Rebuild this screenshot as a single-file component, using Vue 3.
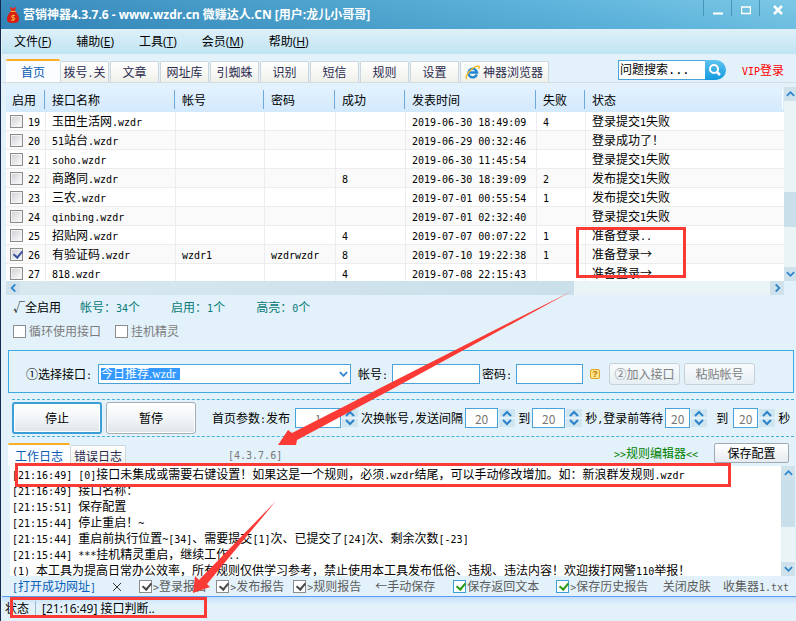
<script setup>
import { ref, h } from 'vue'

// Splits a string so that Latin runs sit on a half-width grid beside full-width glyphs
const T = (props) =>
  h('span', { class: 'mix' },
    props.s.split(/([\x20-\x7e]+)/).filter(Boolean).map((p) =>
      /^[\x20-\x7e]/.test(p) ? h('span', { class: 'half' }, p) : p))
T.props = ['s']

const menus = [['文件', 'F'], ['辅助', 'E'], ['工具', 'T'], ['会员', 'M'], ['帮助', 'H']]
const tabs = ['首页', '拨号.关', '文章', '网址库', '引蜘蛛', '识别', '短信', '规则', '设置']
const heads = ['启用', '接口名称', '帐号', '密码', '成功', '发表时间', '失败', '状态']
const rows = ref([
  { id: 19, on: false, cells: ['玉田生活网.wzdr', '', '', '', '2019-06-30 18:49:09', '4', '登录提交1失败'] },
  { id: 20, on: false, cells: ['51站台.wzdr', '', '', '', '2019-06-29 00:32:46', '', '登录成功了！'] },
  { id: 21, on: false, cells: ['soho.wzdr', '', '', '', '2019-06-30 11:45:54', '', '登录提交1失败'] },
  { id: 22, on: false, cells: ['商路同.wzdr', '', '', '8', '2019-06-30 18:39:09', '2', '发布提交1失败'] },
  { id: 23, on: false, cells: ['三农.wzdr', '', '', '', '2019-07-01 00:55:54', '1', '发布提交1失败'] },
  { id: 24, on: false, cells: ['qinbing.wzdr', '', '', '', '2019-07-01 02:32:40', '', '登录提交1失败'] },
  { id: 25, on: false, cells: ['招贴网.wzdr', '', '', '4', '2019-07-07 00:07:22', '1', '准备登录..'] },
  { id: 26, on: true, cells: ['有验证码.wzdr', 'wzdr1', 'wzdrwzdr', '8', '2019-07-10 19:22:38', '1', '准备登录→'] },
  { id: 27, on: false, cells: ['818.wzdr', '', '', '4', '2019-07-08 22:15:43', '', '准备登录→'] },
])
const logs = [
  '[21:16:49] [0]接口未集成或需要右键设置！如果这是一个规则，必须.wzdr结尾，可以手动修改增加。如：新浪群发规则.wzdr',
  '[21:16:49] 接口名称：',
  '[21:15:51] 保存配置',
  '[21:15:44] 停止重启！~',
  '[21:15:44] 重启前执行位置~[34]、需要提交[1]次、已提交了[24]次、剩余次数[-23]',
  '[21:15:44] ***挂机精灵重启，继续工作..',
  '(1) 本工具为提高日常办公效率，所有规则仅供学习参考，禁止使用本工具发布低俗、违规、违法内容！欢迎拨打网警110举报！',
]
const reports = ['>登录报告', '>发布报告', '>规则报告']
</script>

<template>
  <div class="window" lang="zh-CN">
    <header class="title">
      <svg class="bag" viewBox="0 0 12 16" aria-hidden="true">
        <path d="M3 0 6 1 9 0 8 4H4Z" fill="#e32a1c" />
        <path d="M4 4h4c2 2 4 5 4 8 0 3-2 4-6 4s-6-1-6-4c0-3 2-6 4-8Z" fill="#d81d14" />
        <path d="M3.500 4.500h5" stroke="#f2b632" />
        <path d="M8 8.500H5.500a1 1 0 0 0 0 2h1a1 1 0 0 1 0 2.500H4M6 7.500v6.500" fill="none" stroke="#f4b83c" />
      </svg>
      <h1>营销神器4.3.7.6 - www.wzdr.cn 微赚达人.CN [用户:龙儿小哥哥]</h1>
      <div class="winbtns">
        <button type="button" aria-label="最小化"><svg viewBox="0 0 10 10"><path d="M0 8.500h10" stroke="#fff" stroke-width="2" /></svg></button>
        <button type="button" aria-label="最大化"><svg viewBox="0 0 10 10"><path d="M0 2h10M.5 2v6.500h9V2" fill="none" stroke="#fff" stroke-width="1.500" /></svg></button>
        <button type="button" class="close" aria-label="关闭"><svg viewBox="0 0 10 10"><path d="M1 1l8 8M9 1 1 9" stroke="#fff" stroke-width="2.500" /></svg></button>
      </div>
    </header>

    <nav class="menu">
      <button v-for="m in menus" :key="m[1]" type="button">{{ m[0] }}(<u>{{ m[1] }}</u>)</button>
    </nav>

    <div class="tabbar">
      <div class="tabs">
        <button v-for="(t, i) in tabs" :key="t" type="button" class="tab" :class="{ active: i === 0 }"><T :s="t" /></button>
        <button type="button" class="tab wide">
          <svg class="ie" viewBox="0 0 15 15" aria-hidden="true">
            <path d="M11.800 9.500A4.300 4.300 0 1 1 12 7.500H4" fill="none" stroke="#1f86d2" stroke-width="2.400" />
            <path d="M2 14C-1 11 7 2 13 1c2 0 1 2 .5 3" fill="none" stroke="#f0bd2c" stroke-width="1.500" />
          </svg>
          <T s="神器浏览器" />
        </button>
      </div>
      <form class="search" @submit.prevent>
        <input type="text" value="问题搜索..." aria-label="问题搜索" />
        <button type="submit" aria-label="搜索">
          <svg viewBox="0 0 14 14"><circle cx="6" cy="6" r="4" fill="none" stroke="#fff" stroke-width="2" /><path d="m9 9 3 3" stroke="#fff" stroke-width="2.500" /></svg>
        </button>
      </form>
      <a class="vip" href="#"><T s="VIP登录" /></a>
    </div>

    <div class="grid">
      <div class="gridview">
        <table>
          <colgroup><col class="c40" /><col class="c130" /><col class="c89" /><col class="c71" /><col class="c70" /><col class="c131" /><col class="c49" /><col /></colgroup>
          <thead>
            <tr><th v-for="x in heads" :key="x" scope="col"><div>{{ x }}</div></th></tr>
          </thead>
          <tbody>
            <tr v-for="r in rows" :key="r.id">
              <td class="pick"><label><input v-model="r.on" type="checkbox" class="box soft" /><T :s="String(r.id)" /></label></td>
              <td v-for="(c, i) in r.cells" :key="i"><T :s="c" /></td>
            </tr>
          </tbody>
        </table>
      </div>
      <div class="vbar">
        <button type="button" aria-label="向上"><svg viewBox="0 0 10 10"><path d="m1 7 4-4 4 4" /></svg></button>
        <i class="space"></i><i class="thumb"></i><i class="space small"></i>
        <button type="button" aria-label="向下"><svg viewBox="0 0 10 10"><path d="m1 3 4 4 4-4" /></svg></button>
      </div>
    </div>
    <div class="hbar">
      <button type="button" aria-label="向左"><svg viewBox="0 0 10 10"><path d="M7 1 3 5l4 4" /></svg></button>
      <i class="thumb"></i><i class="space"></i>
      <button type="button" aria-label="向右"><svg viewBox="0 0 10 10"><path d="m3 1 4 4-4 4" /></svg></button>
    </div>

    <div class="counts">
      <button type="button">√全启用</button>
      <T s="帐号：34个" /><T s="启用：1个" /><T s="高亮：0个" />
    </div>
    <div class="opts">
      <label><input type="checkbox" class="box" />循环使用接口</label>
      <label><input type="checkbox" class="box" />挂机精灵</label>
    </div>

    <section class="account">
      <label for="iface"><T s="①选择接口:" /></label>
      <div class="combo">
        <select id="iface"><option>今日推荐.wzdr</option></select>
        <svg viewBox="0 0 10 10" aria-hidden="true"><path d="m1 3 4 4 4-4" /></svg>
      </div>
      <label for="acc"><T s="帐号:" /></label>
      <input id="acc" type="text" class="field long" />
      <label for="pwd"><T s="密码:" /></label>
      <input id="pwd" type="text" class="field" />
      <button type="button" class="help" aria-label="帮助">?</button>
      <button type="button" class="flat">②加入接口</button>
      <button type="button" class="flat">粘贴帐号</button>
    </section>

    <section class="run">
      <button type="button" class="big primary">停止</button>
      <button type="button" class="big">暂停</button>
      <label for="n1" class="first"><T s="首页参数:发布" /></label>
      <div class="spin w46"><input id="n1" type="text" value="1" /><svg viewBox="0 0 16 18"><path d="M0 0h16v8H0zM0 10h16v8H0z" class="bg" /><path d="m4 7 4-4 4 4M4 11l4 4 4-4" /></svg></div>
      <label for="n2"><T s="次换帐号,发送间隔" /></label>
      <div class="spin w33"><input id="n2" type="text" value="20" /><svg viewBox="0 0 16 18"><path d="M0 0h16v8H0zM0 10h16v8H0z" class="bg" /><path d="m4 7 4-4 4 4M4 11l4 4 4-4" /></svg></div>
      <label for="n3">到</label>
      <div class="spin w33"><input id="n3" type="text" value="20" /><svg viewBox="0 0 16 18"><path d="M0 0h16v8H0zM0 10h16v8H0z" class="bg" /><path d="m4 7 4-4 4 4M4 11l4 4 4-4" /></svg></div>
      <label for="n4"><T s="秒,登录前等待" /></label>
      <div class="spin w25"><input id="n4" type="text" value="20" /><svg viewBox="0 0 16 18"><path d="M0 0h16v8H0zM0 10h16v8H0z" class="bg" /><path d="m4 7 4-4 4 4M4 11l4 4 4-4" /></svg></div>
      <label for="n5" class="apart">到</label>
      <div class="spin w25"><input id="n5" type="text" value="20" /><svg viewBox="0 0 16 18"><path d="M0 0h16v8H0zM0 10h16v8H0z" class="bg" /><path d="m4 7 4-4 4 4M4 11l4 4 4-4" /></svg></div>
      <span>秒</span>
    </section>

    <div class="logbar">
      <button type="button" class="tab active">工作日志</button>
      <button type="button" class="tab">错误日志</button>
      <span class="ver">[4.3.7.6]</span>
      <a class="editor" href="#"><T s=">>规则编辑器<<" /></a>
      <button type="button" class="save">保存配置</button>
    </div>
    <div class="log">
      <div class="lines"><p v-for="(l, i) in logs" :key="i"><T :s="l" /></p></div>
      <div class="vbar">
        <button type="button" aria-label="向上"><svg viewBox="0 0 10 10"><path d="m1 7 4-4 4 4" /></svg></button>
        <i class="thumb"></i><i class="space"></i>
        <button type="button" aria-label="向下"><svg viewBox="0 0 10 10"><path d="m1 3 4 4 4-4" /></svg></button>
      </div>
    </div>

    <div class="tools">
      <a class="open" href="#"><T s="[打开成功网址]" /></a>
      <button type="button" class="x" aria-label="清除"><svg viewBox="0 0 10 10"><path d="m1 1 8 8M9 1 1 9" /></svg></button>
      <div class="reports">
        <label v-for="r in reports" :key="r"><input type="checkbox" class="box" checked /><T :s="r" /></label>
      </div>
      <button type="button" class="manual">←手动保存</button>
      <label class="ret"><input type="checkbox" class="box green" checked />保存返回文本</label>
      <label class="hist"><input type="checkbox" class="box green" checked /><T s=">保存历史报告" /></label>
      <button type="button" class="skin">关闭皮肤</button>
      <a class="txt" href="#"><T s="收集器1.txt" /></a>
    </div>

    <footer class="status"><span>状态</span><span class="msg">[21:16:49] 接口判断..</span></footer>

    <svg class="marks" width="796" height="621" viewBox="0 0 796 621" aria-hidden="true">
      <g fill="none" stroke="#fb3a35" stroke-width="3">
        <rect x="577.500" y="228.500" width="107" height="48" />
        <rect x="16.500" y="464.500" width="713" height="21" />
        <rect x="11.500" y="598.500" width="194" height="18" />
      </g>
      <path d="M572 291 396 380 292 433 288 430 278 445H296L297 440 396 387Z" fill="#fb3a35" />
      <path d="M276 501 199 580 195 576 193 593 210 587 207 584Z" fill="#fb3a35" />
    </svg>
  </div>
</template>

<style>
body { margin: 0; overflow: hidden; }
.mix { white-space: pre; }
.mix .half { font-family: "DejaVu Sans Mono", monospace; font-size: 10px; line-height: 10px; }
</style>

<style scoped>
.window {
  position: relative;
  display: flex;
  flex-direction: column;
  height: 100vh;
  box-sizing: border-box;
  border-left: 1px solid #14294f;
  padding-left: 1px;
  overflow: hidden;
  background: #e3f2fa;
  color: #000;
  font: 12px/16px "Noto Sans CJK SC", sans-serif;
}
.window * { box-sizing: border-box; }
button, input, select { font: inherit; color: inherit; margin: 0; padding: 0; border: 0; background: none; border-radius: 0; }
button, label, a, span { white-space: nowrap; }
a { color: inherit; text-decoration: none; }
i { display: block; }

.title {
  display: flex;
  align-items: center;
  flex: none;
  height: 29px;
  margin-left: -1px;
  padding-left: 6px;
  background: linear-gradient(12deg, #3182b6 0%, #4a9fca 40%, #5cb2da 70%, #7cc8e6 100%);
  color: #fff;
}
.bag { width: 12px; height: 16px; }
h1 { flex: 1; margin: 0 0 0 4px; font: bold 12px/18px "Open Sans", "Noto Sans CJK SC", sans-serif; white-space: nowrap; }
.winbtns { display: flex; align-self: flex-start; }
.winbtns button { width: 28px; height: 16px; border-left: 1px solid #4597bd; }
.winbtns .close { width: 37px; }
.winbtns svg { display: block; width: 10px; height: 10px; margin: 3px auto 0; }

.menu { display: flex; gap: 25px; flex: none; height: 25px; padding-left: 12px; background: linear-gradient(#dff0f8, #bfe4f4); font-family: "Open Sans", "Noto Sans CJK SC", sans-serif; }

.tabbar { display: flex; flex: none; align-items: flex-end; height: 29px; border-bottom: 1px solid #d4dde2; padding-left: 4px; }
.tabs { display: flex; }
.tab { align-self: flex-end; width: 49px; height: 21px; margin-right: 1px; border: 1px solid #ccd6dc; border-bottom: 0; border-radius: 2px 2px 0 0; background: linear-gradient(#fff, #f0f0ea); color: #2c2c50; line-height: 18px; }
.tab.active { width: 54px; height: 23px; margin-right: 0; border: 0; border-top: 2px solid #f8ac28; background: #fcfdff; color: #0a5bb5; }
.tab.wide { display: flex; align-items: center; gap: 3px; width: 89px; padding-left: 4px; }
.ie { width: 15px; height: 15px; flex: none; }
.search { display: flex; align-self: center; margin-left: auto; height: 20px; margin-top: 4px; }
.search input { width: 87px; padding-left: 1px; border: 1px solid #4aa3d8; border-right: 0; background: #fff; font-family: "DejaVu Sans Mono", "Noto Sans CJK SC", sans-serif; }
.search button { width: 21px; border-radius: 0 10px 10px 0; background: linear-gradient(#5fc4f0, #129ade); }
.search svg { display: block; width: 14px; height: 14px; margin-left: 3px; }
.vip { align-self: center; margin: 4px 12px 0 16px; color: #f00; }

.grid { display: flex; flex: none; height: 194px; margin: 4px 0 0 4px; }
.gridview { flex: 1; min-width: 0; overflow: hidden; }
table { width: 100%; table-layout: fixed; border-collapse: separate; border-spacing: 0; background: #fff; }
.c40 { width: 40px; } .c130 { width: 130px; } .c89 { width: 89px; } .c71 { width: 71px; }
.c70 { width: 70px; } .c131 { width: 131px; } .c49 { width: 49px; }
th { height: 25px; padding: 0; background: linear-gradient(#e3f2ff, #d3e9fc); font-weight: normal; text-align: left; }
th div { height: 19px; margin-right: 1px; padding-left: 6px; border-right: 1px solid #6da9dd; line-height: 19px; }
th:last-child div { border-color: #fff; }
td { height: 19px; padding: 0 0 0 6px; border-right: 1px solid #ececec; border-bottom: 1px solid #ececec; line-height: 18px; overflow: hidden; white-space: nowrap; }
td:last-child { border-right: 0; }
tbody tr:nth-child(even) { background: #fafafa; }
td.pick { padding-left: 4px; }
td label, .opts label, .tools label { display: flex; align-items: center; }
td label { gap: 5px; }

.box { appearance: none; flex: none; width: 13px; height: 13px; border: 1px solid #8c8c8c; background: #fff; }
.box.soft { background: linear-gradient(135deg, #ccced4, #fff); box-shadow: inset 0 0 0 1px #f2f2f2; }
.box:checked::after { content: ""; display: block; width: 4px; height: 7px; margin: 0 0 0 4px; border: solid #484848; border-width: 0 2px 2px 0; transform: rotate(40deg); }
.box.soft:checked::after { border-color: #3a52a0; }
.box.green { border-color: #3b9fd8; }
.box.green:checked::after { border-color: #2c9a14; }

.vbar { display: flex; flex-direction: column; flex: none; width: 12px; background: #eaf3f6; }
.vbar button, .hbar button { display: flex; align-items: center; justify-content: center; flex: none; width: 100%; height: 14px; background: #cfe2ec; }
.vbar svg, .hbar svg, .combo svg { width: 9px; height: 10px; flex: none; }
.vbar path, .hbar path, .combo path, .spin path { fill: none; stroke: #2c83cc; stroke-width: 2; }
.space { flex: 92; }
.space.small { flex: 40; }
.grid .thumb { flex: 35; background: #c9dfea; }
.hbar { display: flex; flex: none; height: 14px; margin: 0 12px 0 4px; background: #eaf3f6; }
.hbar button { width: 14px; }
.hbar .thumb { flex: 553; background: linear-gradient(90deg, #d8e8ef, #c9dfea); }
.hbar .space { flex: 196; }

.counts { display: flex; gap: 31px; flex: none; height: 24px; padding-left: 11px; line-height: 24px; color: #087a78; }
.counts button { color: #000; margin-right: -12px; }
.opts { display: flex; gap: 14px; flex: none; height: 24px; padding-left: 11px; color: #7c7c7c; }
.opts label { gap: 3px; }

.account { display: flex; align-items: center; flex: none; height: 43px; margin: 7px 2px 6px 6px; padding: 4px 0 0 17px; border: 1px solid #3cabe0; }
.combo { position: relative; flex: 1 1 253px; max-width: 480px; margin: 0 7px 0 6px; }
.combo select { display: block; appearance: none; width: 100%; height: 20px; padding-left: 2px; border: 1px solid #4aa3d8; background: #fff linear-gradient(#3399ff, #3399ff) 2px 3px / 79px 12px no-repeat; color: #fff; font-family: "Liberation Serif", "Noto Sans CJK SC", sans-serif; }
.combo svg { position: absolute; right: 3px; top: 5px; }
.field { width: 67px; height: 20px; border: 1px solid #4aa3d8; background: #fff; }
.field.long { width: 88px; margin-right: 2px; }
.account label + .field { margin-left: 4px; }
.help { width: 10px; height: 10px; margin: 0 9px 0 7px; border: 1px solid #e2a51e; border-radius: 2px; background: #fde48c; color: #b87400; font: bold 9px/8px "Liberation Sans", sans-serif; }
.flat { width: 71px; height: 22px; margin-right: 4px; border: 1px solid #c6d0d6; border-radius: 3px; background: linear-gradient(#f8fbfd, #e6eff4); color: #808080; }
.flat:last-child { margin-right: 38px; }

.run { display: flex; align-items: center; flex: none; height: 38px; margin: 0 2px 0 10px; border: dashed #45b0d8; border-width: 1px 0; }
.big { flex: none; width: 90px; height: 32px; margin-right: 4px; border: 1px solid #a4adb4; border-radius: 3px; background: linear-gradient(#fff, #f2f5f8 50%, #dfe5ea); box-shadow: inset 0 0 0 1px #fff; }
.big.primary { border: 2px solid #3b9ed6; }
.first { margin-left: 12px; }
.spin { display: flex; align-items: center; flex: none; margin: 0 3px 0 2px; }
.spin input { height: 20px; border: 1px solid #4aa3d8; background: #fff; color: #777; text-align: center; }
.spin svg { width: 16px; height: 18px; margin-left: 1px; }
.spin .bg { fill: #cfe5f0; stroke: none; }
.first + .spin { margin-left: 5px; }
.w46 input { width: 46px; } .w33 input { width: 33px; } .w25 input { width: 25px; }
.apart { margin: 0 3px 0 6px; }

.logbar { display: flex; flex: none; align-items: center; height: 29px; padding: 2px 7px 0 6px; }
.logbar .tab { width: 56px; }
.logbar .tab.active { width: 62px; }
.ver { margin: 6px 0 0 101px; color: #777; font: 10px/16px "DejaVu Sans Mono", monospace; }
.editor { margin-left: auto; color: #008000; }
.save { width: 75px; height: 20px; margin-left: 16px; border: 1px solid #9ea9b1; border-radius: 2px; background: linear-gradient(#fff, #e6ebef); line-height: 16px; }

.log { display: flex; flex: 1 1 0; min-height: 0; margin: 0 1px 0 8px; background: #fff; }
.lines { flex: 1; min-width: 0; overflow: hidden; padding-left: 2px; }
.lines p { margin: 0; white-space: nowrap; }
.log .vbar { width: 14px; }
.log .thumb { flex: 46; background: #c9dfea; }
.log .space { flex: 35; }

.tools { display: flex; align-items: center; flex: none; height: 20px; padding: 0 7px 0 10px; color: #5c5c5c; }
.tools label { gap: 1px; }
.open { color: #0a60b8; }
.x { margin: 0 17px 0 16px; width: 10px; height: 16px; }
.x svg { display: block; width: 10px; height: 10px; margin-top: 1px; }
.x path { stroke: #333; }
.reports { display: flex; gap: 9px; }
.manual { margin: 0 18px 0 14px; }
.hist { margin-left: 17px; }
.skin { margin: 0 12px 0 auto; }

.status { display: flex; align-items: center; flex: none; height: 25px; padding-left: 3px; border-top: 1px solid #5a9cf0; background: linear-gradient(#c4dffa, #e3f2fa 8px); font-family: "Open Sans", "Noto Sans CJK SC", sans-serif; }
.msg { margin-left: 6px; padding-left: 6px; border-left: 1px solid #9cb8cc; }

.marks { position: absolute; left: -1px; top: 0; pointer-events: none; }
</style>
